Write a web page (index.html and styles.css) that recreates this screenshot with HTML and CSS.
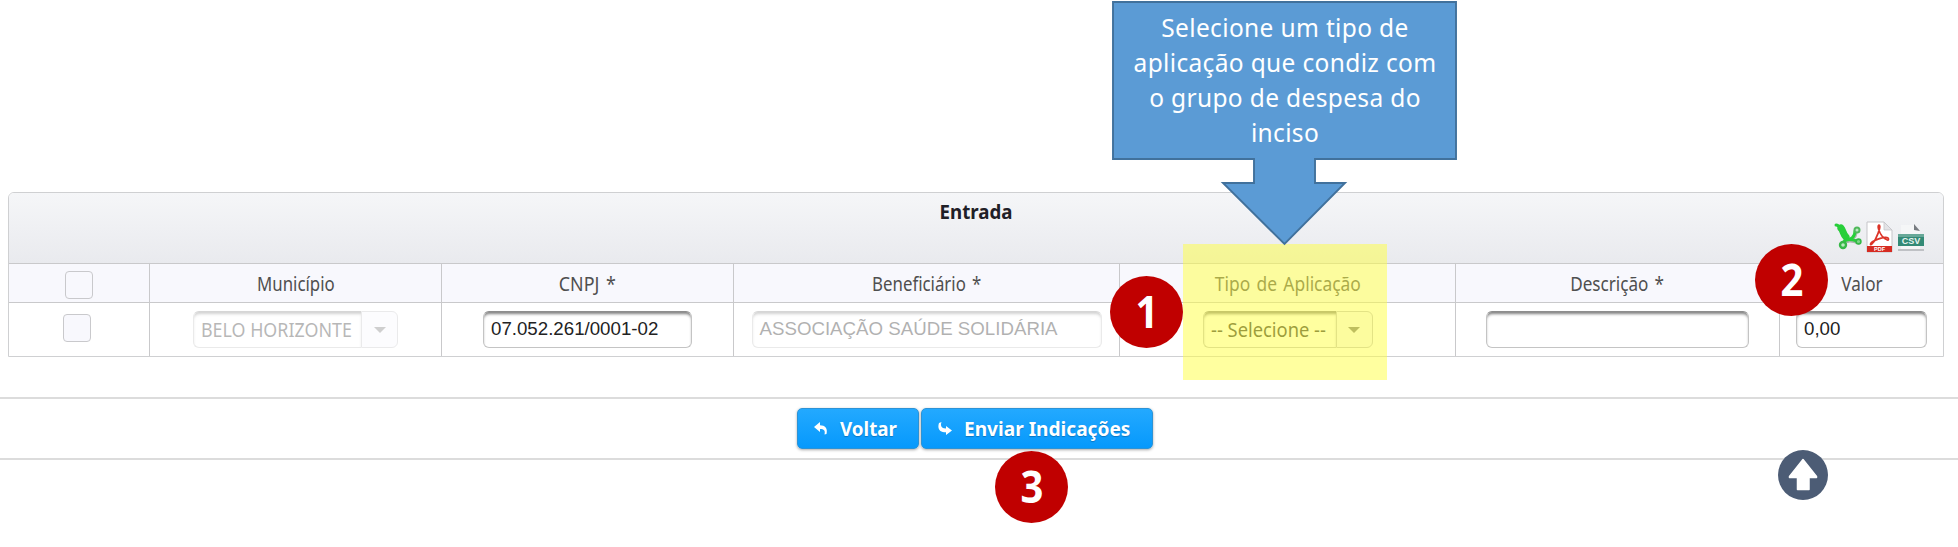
FILE: index.html
```html
<!DOCTYPE html>
<html lang="pt-BR">
<head>
<meta charset="utf-8">
<title>Entrada</title>
<link rel="stylesheet" href="styles.css">
</head>
<body>
<main class="page">
  <section class="panel">
    <header class="panel-head">
      <h1 class="panel-title"><span class="t-title">Entrada</span></h1>
      <div class="exports">
        <svg class="icon-xls" width="28" height="28" viewBox="0 0 28 28">
          <g fill="none" stroke="#a9b3ab" stroke-linecap="round" transform="translate(1 1)">
            <path d="M5 6C10 5 8 13 13 17" stroke-width="5"/>
            <path d="M10 17C16 18 21 15 21 9" stroke-width="3"/>
            <path d="M8 23C10 17 16 17 24 20" stroke-width="3"/>
          </g>
          <g fill="none" stroke="#27cf3a" stroke-linecap="round">
            <path d="M2 3C4 3 5 4 6 6" stroke-width="3"/>
            <path d="M7 6C9 8 9 12 12 15" stroke-width="7"/>
            <path d="M12 17C17 18 21 15 21 9" stroke-width="3"/>
            <path d="M9 21C11 17 17 17 23 19" stroke-width="3"/>
          </g>
          <circle cx="9" cy="23" r="3" fill="#b9e8bf" stroke="#36b848" stroke-width="2.4"/>
          <circle cx="23" cy="8" r="2.500" fill="#b9e8bf" stroke="#4fb95b" stroke-width="2"/>
          <circle cx="24.500" cy="19.500" r="2.400" fill="#7fd58a" stroke="#35b847" stroke-width="1.600"/>
        </svg>
        <svg class="icon-pdf" width="27" height="32" viewBox="0 0 27 32">
          <path d="M1 1H18L26 9V31H1Z" fill="#fff" stroke="#c5c5c9"/>
          <path d="M18 1V9H26Z" fill="#e3e3e6" stroke="#c5c5c9" stroke-width=".8"/>
          <path d="M13 4 C11 5 13 11 16 15 C20 20 24 20 22 17 C19 15 8 19 5 22 C3 25 7 24 10 17 C13 11 15 4 13 4Z" fill="none" stroke="#dc3428" stroke-width="1.7"/>
          <rect x="1" y="25" width="25" height="6" fill="#d62b22"/>
          <text x="13.5" y="30.300" class="pdf-label">PDF</text>
        </svg>
        <svg class="icon-csv" width="28" height="30" viewBox="0 0 28 30">
          <path d="M4 3H17L23 10V27H4Z" fill="#f5f6f7"/>
          <path d="M17 2L23 9L17 8Z" fill="#777b80"/>
          <rect x="1" y="12" width="26" height="12" fill="#338a76"/>
          <rect x="1" y="12" width="26" height="3" fill="#67a898"/>
          <path d="M1 28H27" stroke="#bfc1c5" stroke-width="2"/>
          <text x="14" y="21.500" class="csv-label">CSV</text>
        </svg>
      </div>
    </header>

    <div class="row row-head">
      <div class="cell"><span class="check check-all"></span></div>
      <div class="cell"><span class="label l-mun">Município</span></div>
      <div class="cell"><span class="label l-cnpj">CNPJ *</span></div>
      <div class="cell"><span class="label l-ben">Beneficiário *</span></div>
      <div class="cell"><span class="label l-tipo">Tipo de Aplicação</span></div>
      <div class="cell"><span class="label l-desc">Descrição *</span></div>
      <div class="cell"><span class="label l-val">Valor</span></div>
    </div>

    <div class="row row-body">
      <div class="cell"><span class="check"></span></div>
      <div class="cell">
        <div class="select select-mun disabled">
          <span class="select-value"><span class="v-mun">BELO HORIZONTE</span></span>
          <span class="select-arrow"></span>
        </div>
      </div>
      <div class="cell"><div class="field">07.052.261/0001-02</div></div>
      <div class="cell"><div class="field field-ben disabled">ASSOCIAÇÃO SAÚDE SOLIDÁRIA</div></div>
      <div class="cell">
        <div class="select select-tipo">
          <span class="select-value"><span class="v-tipo">-- Selecione --</span></span>
          <span class="select-arrow"></span>
        </div>
      </div>
      <div class="cell"><div class="field field-desc"></div></div>
      <div class="cell"><div class="field field-val">0,00</div></div>
    </div>
  </section>

  <footer class="actions">
    <button class="btn btn-back">
      <svg width="14" height="13" viewBox="0 0 14 13"><path d="M0 5L6 0V3.200C11 3.200 14 6 12.500 12L10.500 12.500C11.500 8.500 10 7 6 7V10Z" fill="#fff"/></svg>
      <span class="b-back">Voltar</span>
    </button>
    <button class="btn btn-send">
      <svg width="14" height="13" viewBox="0 0 14 13"><path d="M14 8.500L8 13V10.300C2 10.300-1 7 1 1L3.500 0C2 4 3.500 6.500 8 6.500V4Z" fill="#fff"/></svg>
      <span class="b-send">Enviar Indicações</span>
    </button>
  </footer>

  <div class="highlight"></div>

  <div class="callout">
    <svg class="callout-shape" width="346" height="246" viewBox="0 0 346 246">
      <path d="M1 2H344V159H203V183H233L172.500 244L111 183H142V159H1Z" fill="#5b9bd5" stroke="#41719c" stroke-width="1.900"/>
    </svg>
    <p class="callout-text">
      <span>Selecione um tipo de</span>
      <span>aplicação que condiz com</span>
      <span>o grupo de despesa do</span>
      <span>inciso</span>
    </p>
  </div>

  <div class="step step-1"><span>1</span></div>
  <div class="step step-2"><span>2</span></div>
  <div class="step step-3"><span>3</span></div>

  <svg class="to-top" width="52" height="52" viewBox="0 0 52 52">
    <circle cx="26" cy="26" r="25" fill="#4c5c75"/>
    <path d="M26 10.500L39.500 27.500V28.500H32V40.500H20.500V28.500H12.500V27.500Z" fill="#fff" stroke="#fff" stroke-width="1.500" stroke-linejoin="round"/>
  </svg>
</main>
</body>
</html>
```
FILE: styles.css
```css
* {
  box-sizing: border-box;
}

body {
  margin: 0;
  background: #fff;
  font-family: "Noto Sans", "Open Sans", sans-serif;
  color: #4f4f4f;
}

.page {
  position: relative;
  width: 1958px;
  height: 547px;
  overflow: hidden;
  padding: 192px 14px 0 8px;
}

.panel {
  border: 1.5px solid #cfd0d2;
  border-radius: 6px 6px 0 0;
  overflow: hidden;
  height: 165px;
}

.panel-head {
  height: 70px;
  display: flex;
  flex-direction: column;
  align-items: center;
  padding: 5px 18px 0 0;
  background: linear-gradient(#f5f6f8, #e9eaee);
}

.panel-title {
  margin: 0;
  font-size: 20px;
  line-height: 27px;
  font-weight: 700;
  color: #1f2027;
  padding-left: 18px;
}

.t-title {
  display: inline-block;
  transform: scaleX(.935);
}

.exports {
  align-self: flex-end;
  display: flex;
  gap: 4px;
  height: 32px;
  margin-top: -4px;
}

.icon-xls,
.icon-csv {
  margin-top: 1px;
}

.pdf-label {
  font: 700 5.5px "Liberation Sans", sans-serif;
  fill: #fff;
  text-anchor: middle;
}

.csv-label {
  font: 700 9px "Liberation Sans", sans-serif;
  fill: #e8f4f0;
  text-anchor: middle;
}

.row {
  display: grid;
  grid-template-columns: 141px 292px 292px 386px 336px 324px 1fr;
  border-top: 1px solid #c9c9cb;
}

.row-head {
  height: 39px;
  background: #f8f8fd;
}

.row-body {
  height: 54px;
  background: #fff;
}

.cell {
  display: flex;
  align-items: center;
  justify-content: center;
  border-right: 1px solid #c9c9cb;
}

.cell:last-child {
  border-right: 0;
}

.label {
  display: inline-block;
  padding-top: 2px;
  font-size: 19px;
  line-height: 26px;
  white-space: nowrap;
  word-spacing: 2px;
  transform: scaleX(.9);
}

.l-mun {
  transform: scaleX(.885);
}

.l-cnpj {
  transform: scaleX(.94);
}

.l-ben {
  transform: scaleX(.885);
}

.l-tipo {
  transform: scaleX(.915);
}

.check {
  width: 28px;
  height: 28px;
  border: 1.5px solid #c9c9cc;
  border-radius: 4px;
  background: #f8f8fd;
  margin: 0 4px 4px 0;
}

.check-all {
  margin: 3px 0 0;
}

.field {
  width: 209px;
  height: 37px;
  padding: 0 7px;
  border: 1px solid #c4c4c4;
  border-top-color: #8d8d8d;
  border-radius: 6px;
  box-shadow: inset 0 3px 3px -1px #808080;
  background: #fff;
  color: #222;
  font: 18.7px/33px "Liberation Sans", Arial, sans-serif;
  white-space: nowrap;
}

.field-ben {
  width: 350px;
}

.field-desc {
  width: 263px;
}

.field-val {
  width: 131px;
}

.disabled {
  opacity: .35;
}

.select {
  display: flex;
  height: 37px;
  font-size: 19px;
  line-height: 36px;
  white-space: nowrap;
  color: #333;
}

.select-value {
  flex: 1;
  width: 0;
  padding-left: 7px;
  border: 1px solid #c4c4c4;
  border-top-color: #8d8d8d;
  border-right: 0;
  border-radius: 6px 0 0 6px;
  box-shadow: inset 0 3px 3px -1px #808080;
}

.v-mun,
.v-tipo {
  display: inline-block;
  transform: scaleX(.94);
  transform-origin: left;
}

.v-tipo {
  transform: scaleX(.965);
}

.select-arrow {
  width: 37px;
  display: flex;
  align-items: center;
  justify-content: center;
  border: 1px solid #c4c4c8;
  border-radius: 0 6px 6px 0;
  background: #f8f8fd;
}

.select-arrow::before {
  content: "";
  border: 6px solid transparent;
  border-top-color: #777;
  border-bottom: 0;
}

.select-mun {
  width: 205px;
}

.select-tipo {
  width: 170px;
}

.actions {
  display: flex;
  justify-content: center;
  gap: 2px;
  height: 63px;
  margin: 40px -14px 0 -8px;
  padding: 9px 8px 0 0;
  border-top: 2px solid #dcdcdc;
  border-bottom: 2px solid #dcdcdc;
}

.btn {
  display: flex;
  align-items: center;
  height: 41px;
  padding: 0 0 0 16px;
  border: 1px solid #2c93d6;
  border-radius: 5px;
  background: linear-gradient(#23a9ff, #0699fc);
  box-shadow: 0 1px 3px rgba(0, 0, 0, .35);
  color: #fff;
  font: 700 20px/30px "Noto Sans", sans-serif;
  white-space: nowrap;
  text-shadow: 0 1px 1px rgba(0, 60, 110, .4);
}

.btn svg {
  flex: none;
}

.b-back,
.b-send {
  display: inline-block;
  transform: scaleX(.94);
  transform-origin: left;
}

.b-send {
  transform: scaleX(.955);
}

.btn-back {
  width: 122px;
  gap: 12px;
}

.btn-send {
  width: 232px;
  gap: 12px;
}

.highlight {
  position: absolute;
  left: 1183px;
  top: 244px;
  width: 204px;
  height: 136px;
  background: rgba(255, 255, 70, .52);
}

.callout {
  position: absolute;
  left: 1112px;
  top: 0;
  width: 346px;
  height: 246px;
}

.callout-shape {
  position: absolute;
  left: 0;
  top: 0;
}

.callout-text {
  position: relative;
  display: flex;
  flex-direction: column;
  align-items: center;
  margin: 0;
  padding-top: 10px;
  font-size: 24.5px;
  line-height: 35px;
  letter-spacing: .35px;
  color: #fff;
  white-space: nowrap;
}

.step {
  position: absolute;
  width: 73px;
  height: 72px;
  border-radius: 50%;
  background: #c00000;
  color: #fff;
  display: flex;
  align-items: center;
  justify-content: center;
  font-size: 45px;
  line-height: 70px;
  font-weight: 700;
}

.step span {
  display: inline-block;
  height: 72px;
  transform: scaleX(.89);
}

.step-1 {
  left: 1110px;
  top: 276px;
}

.step-2 {
  left: 1755px;
  top: 244px;
}

.step-3 {
  left: 995px;
  top: 451px;
}

.to-top {
  position: absolute;
  left: 1777px;
  top: 449px;
}
```
